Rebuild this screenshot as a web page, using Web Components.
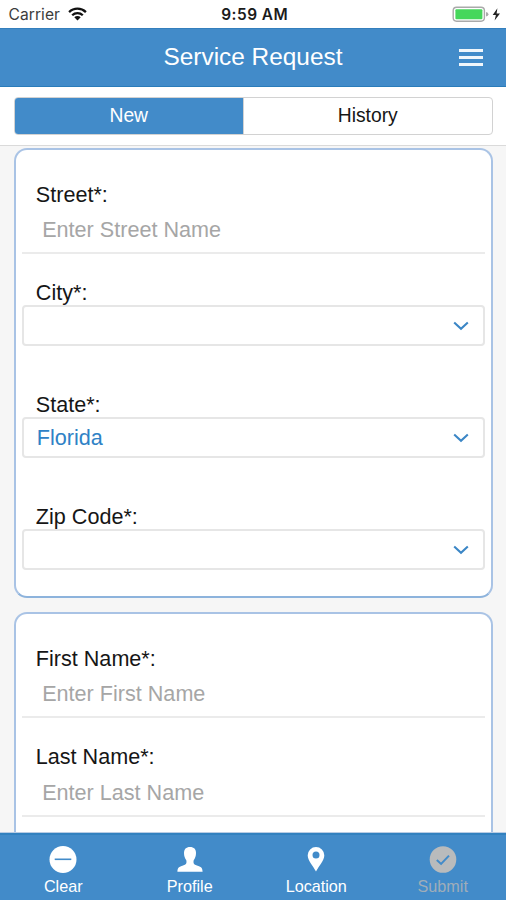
<!DOCTYPE html>
<html lang="en">
<head>
<meta charset="utf-8">
<title>Service Request</title>
<style>
html, body { margin: 0; height: 100%; }
body { font-family: "Liberation Sans", Arial, sans-serif; color: #161616; background: #f6f6f6; overflow: hidden; }
</style>
</head>
<body>
<service-app></service-app>
<script>
function define(name, html, setup) {
  const template = document.createElement('template');
  template.innerHTML = html;
  customElements.define(name, class extends HTMLElement {
    connectedCallback() {
      if (this.shadowRoot) return;
      this.attachShadow({ mode: 'open' }).append(template.content.cloneNode(true));
      if (setup) setup(this, this.shadowRoot);
    }
  });
}

define('status-bar', `
<style>
:host { display: grid; grid-template-columns: 1fr auto 1fr; align-items: center; height: 27.5px; box-sizing: border-box; padding: 1px 5px 0 8.5px; background: #fff; font-family: Inter, sans-serif; flex: none; }
.left { display: flex; align-items: center; gap: 8px; font-size: 15.6px; font-weight: 400; color: #3c3c3c; letter-spacing: .05px; }
.time { font-size: 15.4px; font-weight: 600; letter-spacing: .5px; color: #1b1b1b; }
.right { display: flex; justify-content: flex-end; align-items: center; }
svg { display: block; }
</style>
<div class="left"><span>Carrier</span>
<svg width="19" height="14" viewBox="0 0 19 14"><g fill="none" stroke="#111" stroke-width="2.3"><path d="M1.1 5.1a12 12 0 0 1 16.8 0"/><path d="M4.2 8.3a7.6 7.6 0 0 1 10.6 0"/></g><path d="M9.5 13.4 6.3 10.3a4.6 4.6 0 0 1 6.4 0z" fill="#111"/></svg></div>
<span class="time">9:59 AM</span>
<div class="right"><svg width="49" height="17" viewBox="0 0 49 17"><rect x="1.2" y="1.2" width="31.2" height="14" rx="3.4" fill="#fff" stroke="#aaa" stroke-width="1.4"/><rect x="3.4" y="3.3" width="27" height="10" rx="1" fill="#45d75b"/><path d="M34 6.1q2.4 .5 2.4 2.2t-2.4 2.2z" fill="#aaa"/><path d="M45.4 2.2 40.7 9h3.2l-1.3 5.400L48 7.600h-3.400z" fill="#222"/></svg></div>`);

define('nav-bar', `
<style>
:host { display: grid; grid-template-columns: 1fr auto 1fr; align-items: center; height: 59px; box-sizing: border-box; padding: 0 23.5px; background: #428bc9; border-top: 1px solid #347fbd; border-bottom: 1px solid #2a7cba; color: #fff; flex: none; }
.title { grid-column: 2; font-size: 24.4px; line-height: 28px; }
.menu { justify-self: end; display: grid; gap: 4px; width: 24px; }
i { height: 3px; background: #f0f6fb; }
</style>
<span class="title"><slot></slot></span><div class="menu"><i></i><i></i><i></i></div>`);

define('segment-tabs', `
<style>
:host { display: block; padding: 10px 13px 10px 14px; height: 59px; box-sizing: border-box; background: #fff; border-bottom: 1px solid #dadada; flex: none; }
.group { display: grid; grid-template-columns: 227.5px 1fr; height: 38.5px; box-sizing: border-box; border: 1px solid #d2d2d2; border-radius: 4px; overflow: hidden; }
.tab { display: flex; align-items: center; justify-content: center; font-size: 19.3px; }
.active { background: #428bc9; color: #fff; }
.other { border-left: 1px solid #d2d2d2; }
</style>
<div class="group"><div class="tab active"><slot name="active"></slot></div><div class="tab other"><slot name="other"></slot></div></div>`);

define('form-card', `
<style>
:host { display: block; box-sizing: border-box; background: #fff; border: 2px solid #a9c3e5; border-bottom-color: #8db3dc; border-radius: 13px; padding: 32.5px 6px 26px; margin: 0 13px 0 14px; flex: none; }
.fields { display: flex; flex-direction: column; }
</style>
<div class="fields"><slot></slot></div>`);

define('text-field', `
<style>
:host { display: flex; flex-direction: column; height: 71.5px; box-sizing: border-box; border-bottom: 2px solid #ebebeb; margin-bottom: 27px; font-size: 21.6px; line-height: 24px; }
.label { padding-left: 13.8px; }
.hint { padding: 11.5px 0 0 20.2px; color: #a6a6a6; }
</style>
<div class="label"></div><div class="hint"></div>`, (el, root) => {
  root.querySelector('.label').textContent = el.getAttribute('label');
  root.querySelector('.hint').textContent = el.getAttribute('hint');
});

define('select-field', `
<style>
:host { display: block; font-size: 21.6px; line-height: 24px; margin-bottom: 47px; }
:host(:last-child) { margin-bottom: 0; }
.label { padding-left: 13.8px; }
.box { display: flex; align-items: center; justify-content: space-between; height: 41px; box-sizing: border-box; border: 2px solid #e6e6e6; border-radius: 4px; padding: 0 14px 0 12.8px; color: #2f82c6; }
svg { display: block; }
</style>
<div class="label"></div>
<div class="box"><span><slot></slot></span><svg width="16" height="10" viewBox="0 0 16 10"><path d="m1.200 1.500 6.800 6.300 6.800-6.300" fill="none" stroke="#3b86c6" stroke-width="2.1"/></svg></div>`, (el, root) => {
  root.querySelector('.label').textContent = el.getAttribute('label');
});

define('tool-button', `
<style>
:host { display: flex; flex-direction: column; align-items: center; font-size: 16.2px; line-height: 19px; color: #fff; }
:host([disabled]) { color: #9fadb9; }
::slotted(svg) { display: block; width: 28px; height: 28px; margin-bottom: 3px; }
</style>
<slot name="icon"></slot><span><slot></slot></span>`);

define('tool-bar', `
<style>
:host { display: grid; grid-template-columns: repeat(4, 1fr); height: 67px; box-sizing: border-box; padding-top: 11px; background: #428bc9; border-top: 2px solid #3281bf; box-shadow: 0 -1px #b9cce4; flex: none; z-index: 1; }
</style><slot></slot>`);

define('service-app', `
<style>
:host { display: flex; flex-direction: column; width: 506px; height: 900px; overflow: hidden; }
main { flex: 1; min-height: 0; overflow: hidden; display: flex; flex-direction: column; gap: 14px; padding-top: 2.5px; }
</style>
<status-bar></status-bar>
<nav-bar>Service Request</nav-bar>
<segment-tabs><span slot="active">New</span><span slot="other">History</span></segment-tabs>
<main>
<form-card>
<text-field label="Street*:" hint="Enter Street Name"></text-field>
<select-field label="City*:"></select-field>
<select-field label="State*:">Florida</select-field>
<select-field label="Zip Code*:"></select-field>
</form-card>
<form-card>
<text-field label="First Name*:" hint="Enter First Name"></text-field>
<text-field label="Last Name*:" hint="Enter Last Name"></text-field>
</form-card>
</main>
<tool-bar>
<tool-button><svg slot="icon" viewBox="0 0 28 28"><circle cx="14" cy="13.5" r="13.5" fill="#fff"/><path d="M5.7 13.3h16.6" stroke="#428bc9" stroke-width="1.6"/></svg>Clear</tool-button>
<tool-button><svg slot="icon" viewBox="0 0 28 28"><path d="M14 1c4 0 6 2.200 6 6 0 3.100-.9 5.400-2.300 7.200-.6 3.200.2 4.300 3.200 5.200 4.200 1.200 5.600 2.200 5.700 6.400H1.400c.1-4.200 1.500-5.200 5.700-6.400 3-.9 3.800-2 3.200-5.200C8.900 12.400 8 10.100 8 7c0-3.800 2-6 6-6z" fill="#fff"/></svg>Profile</tool-button>
<tool-button><svg slot="icon" viewBox="0 0 28 28"><path fill-rule="evenodd" d="M14 1a8.300 8.300 0 0 0-8.300 8.300c0 5.400 5.300 10.700 8.300 16.200 3-5.500 8.300-10.800 8.300-16.200A8.300 8.300 0 0 0 14 1zm0 4.500a3.500 3.500 0 1 1 0 7 3.500 3.500 0 0 1 0-7z" fill="#fff"/></svg>Location</tool-button>
<tool-button disabled><svg slot="icon" viewBox="0 0 28 28"><circle cx="14" cy="13.500" r="13.300" fill="#b9bbbc"/><path d="m7.800 13.900 4.300 4 7.900-8.300" fill="none" stroke="#428bc9" stroke-width="2"/></svg>Submit</tool-button>
</tool-bar>`);
</script>
</body>
</html>
